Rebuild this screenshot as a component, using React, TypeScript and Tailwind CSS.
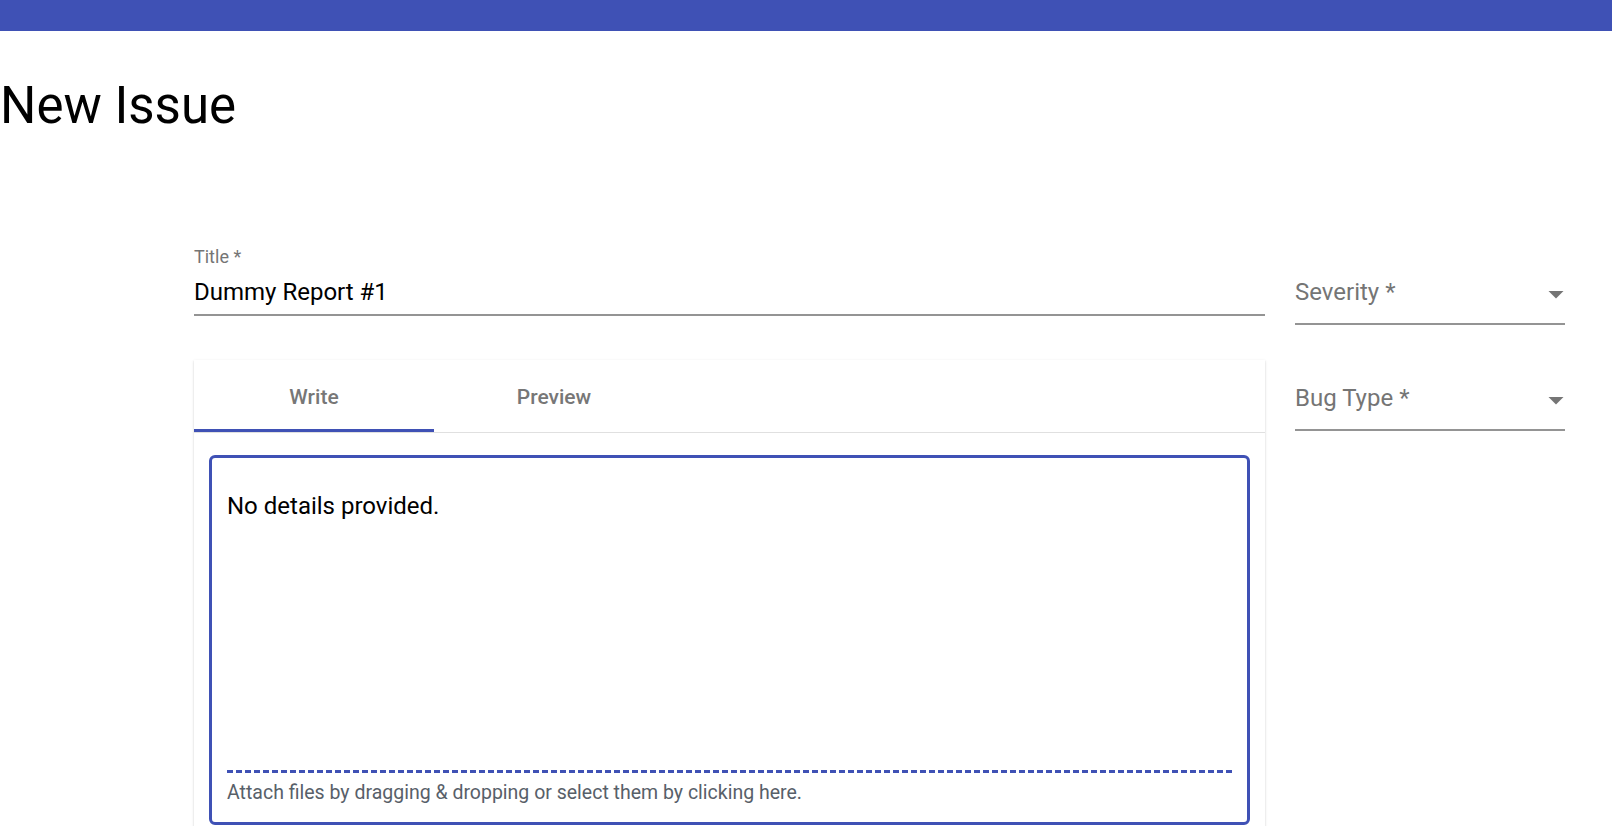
import React from "react";

const ArrowDrop = () => (
  <svg viewBox="0 0 24 24" className="absolute right-[-9px] top-1/2 -translate-y-1/2 mt-[2px] w-[36px] h-[36px] fill-[#757575]">
    <path d="M7 10l5 5 5-5z" />
  </svg>
);

const SelectField = ({ label, className }: { label: string; className?: string }) => (
  <div className={className}>
    <div className="relative pt-[29.5px] pb-[16px] border-b-2 border-[#949494]">
      <div className="relative text-[24px] leading-[29px] text-[#757575]">
        {label}
        <ArrowDrop />
      </div>
    </div>
  </div>
);

export default function App() {
  return (
    <div className="min-h-screen bg-white font-['Roboto','Liberation_Sans',sans-serif] text-black overflow-hidden">
      <div className="h-[31px] bg-[#3f51b5]" />
      <h1 className="pt-[43px] text-[51px] leading-[63px] font-normal">New Issue</h1>

      <div className="mt-[111px] ml-[194px] flex gap-[30px]">
        <div className="w-[1071px]">
          <div className="flex flex-col">
            <label className="text-[18px] leading-[18px] text-[#757575]">Title *</label>
            <div className="mt-[12px] text-[24px] leading-[29px] pb-[7px] border-b-2 border-[#949494]">
              Dummy Report #1
            </div>
          </div>

          <div className="mt-[44px] bg-white shadow-[0_2px_1px_-1px_rgba(0,0,0,0.2),0_1px_1px_0_rgba(0,0,0,0.14),0_1px_3px_0_rgba(0,0,0,0.12)]">
            <div className="flex h-[73px] border-b border-[#e0e0e0]">
              <button className="relative w-[240px] h-[72px] pt-[4px] text-[21px] font-medium text-[#777777]">
                Write
                <span className="absolute left-0 right-0 bottom-0 h-[3px] bg-[#3f51b5]" />
              </button>
              <button className="w-[240px] h-[72px] pt-[4px] text-[21px] font-medium text-[#777777]">Preview</button>
            </div>
            <div className="px-[15px] pt-[22px] pb-[16px]">
              <div className="border-[3px] border-[#3f51b5] rounded-[6px]">
                <div className="h-[312px] px-[15px] pt-[30px] text-[24px] leading-[36px]">No details provided.</div>
                <div className="mx-[15px] h-[3px] bg-[repeating-linear-gradient(to_right,#3f51b5_0_6px,transparent_6px_9px)]" />
                <div className="px-[15px] pt-[6px] pb-[16px] text-[19.5px] leading-[27px] text-[#586069]">
                  Attach files by dragging &amp; dropping or select them by clicking here.
                </div>
              </div>
            </div>
          </div>
        </div>

        <div className="w-[270px]">
          <SelectField label="Severity *" />
          <SelectField label="Bug Type *" className="mt-[29.5px]" />
        </div>
      </div>
    </div>
  );
}
